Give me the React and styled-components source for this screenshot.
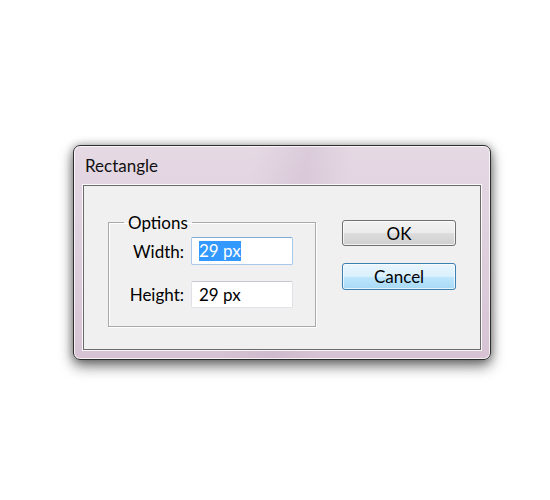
import React from 'react';
import styled, { createGlobalStyle } from 'styled-components';

const GlobalStyle = createGlobalStyle`
  html, body {
    margin: 0;
    padding: 0;
    background: #ffffff;
  }
  body {
    font-family: Lato, "Noto Sans", sans-serif;
    font-size: 17px;
    color: #000;
  }
`;

const Page = styled.div`
  width: 550px;
  height: 500px;
  padding: 145px 0 0 73px;
  box-sizing: border-box;
`;

const Window = styled.div`
  width: 418px;
  height: 215px;
  box-sizing: border-box;
  border: 1px solid #2e2e2e;
  border-radius: 7px;
  display: flex;
  flex-direction: column;
  background:
    linear-gradient(100deg, rgba(255,255,255,0) 40%, rgba(180,150,178,0.2) 52%, rgba(255,255,255,0) 62%),
    linear-gradient(180deg, #e5d9e4 0%, #ddcddb 60%, #d6c2d3 100%);
  box-shadow:
    inset 0 0 0 1px rgba(255, 255, 255, 0.75),
    0 6px 14px rgba(0, 0, 0, 0.55),
    0 0 9px rgba(0, 0, 0, 0.3);
`;

const TitleBar = styled.div`
  height: 39px;
  display: flex;
  align-items: center;
  padding-left: 11px;
  font-size: 17px;
  color: #111;
`;

const Client = styled.div`
  margin: 0 9px 9px 9px;
  flex: 1;
  background: #f0f0f0;
  border: 1px solid #6b6b6b;
  box-shadow: 0 0 0 1px rgba(255, 255, 255, 0.85);
  display: flex;
  align-items: flex-start;
  padding: 26px 0 0 24px;
  gap: 26px;
`;

const Group = styled.fieldset`
  margin: 0;
  width: 208px;
  height: 115px;
  box-sizing: border-box;
  padding: 4px 0 0 0;
  border: 1px solid #a9a9a9;
  box-shadow: inset 1px 1px 0 #ffffff, 1px 1px 0 #ffffff;
`;

const Legend = styled.legend`
  margin-left: 15px;
  padding: 0 4px;
  font-size: 17px;
`;

const Fields = styled.div`
  display: grid;
  grid-template-columns: 75px 102px;
  column-gap: 7px;
  row-gap: 16px;
  align-items: center;
`;

const Label = styled.div`
  justify-self: end;
`;

const TextBox = styled.div`
  height: ${(p) => p.$h}px;
  box-sizing: border-box;
  background: #ffffff;
  border: 1px solid ${(p) => (p.$focused ? '#a9c8ea' : '#dfe3e8')};
  border-top-color: ${(p) => (p.$focused ? '#7eaad8' : '#c5c9cf')};
  border-radius: 2px;
  padding-left: 7px;
  display: flex;
  align-items: center;
`;

const Selected = styled.span`
  background: #3399ff;
  color: #ffffff;
  line-height: 20px;
`;

const Buttons = styled.div`
  display: flex;
  flex-direction: column;
  gap: 17px;
  margin-top: 8px;
`;

const Button = styled.button`
  width: 114px;
  height: ${(p) => p.$h}px;
  box-sizing: border-box;
  font-family: inherit;
  font-size: 17px;
  color: #000;
  padding: 0;
  border-radius: 3px;
  border: 1px solid ${(p) => (p.$default ? '#3c7fb1' : '#707070')};
  background: ${(p) =>
    p.$default
      ? 'linear-gradient(180deg, #eaf6fd 0%, #d9f0fc 50%, #bee6fd 51%, #a7d9f5 100%)'
      : 'linear-gradient(180deg, #f2f2f2 0%, #ebebeb 50%, #dddddd 51%, #cfcfcf 100%)'};
  box-shadow: inset 0 0 0 1px rgba(255, 255, 255, 0.7);
`;

export default function App() {
  return (
    <Page>
      <GlobalStyle />
      <Window>
        <TitleBar>Rectangle</TitleBar>
        <Client>
          <Group>
            <Legend>Options</Legend>
            <Fields>
              <Label>Width:</Label>
              <TextBox $focused $h={28}>
                <Selected>29 px</Selected>
              </TextBox>
              <Label>Height:</Label>
              <TextBox $h={27}>29 px</TextBox>
            </Fields>
          </Group>
          <Buttons>
            <Button $h={26}>OK</Button>
            <Button $h={27} $default>Cancel</Button>
          </Buttons>
        </Client>
      </Window>
    </Page>
  );
}
